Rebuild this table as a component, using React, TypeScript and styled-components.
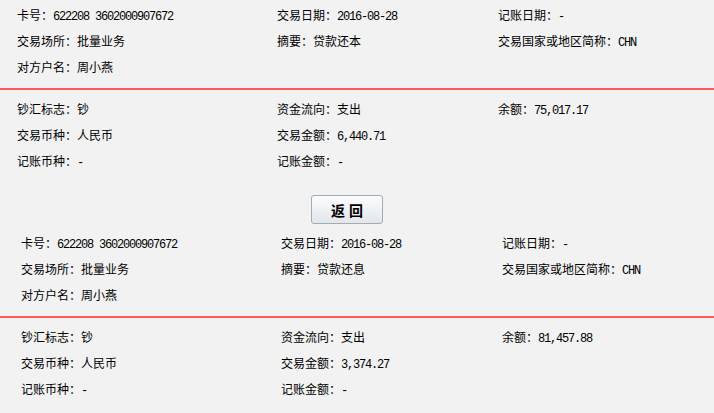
import React from 'react';
import styled, { createGlobalStyle } from 'styled-components';

const GlobalStyle = createGlobalStyle`
	html, body {
		margin: 0;
		padding: 0;
		background-color: #f2f2f2;
	}
	body {
		font-family: "Noto Sans CJK SC", "Liberation Sans", sans-serif;
		font-size: 12px;
		color: #000;
	}
`;

const Sheet = styled.div`
	width: 714px;
	padding-top: 2px;
	background-color: #f2f2f2;
`;

const InfoBlock = styled.div<{ $indent: number; $top?: number; $bottom?: number }>`
	display: grid;
	grid-template-columns: 260px 221px 1fr;
	grid-auto-rows: 26px;
	padding-left: ${(p) => p.$indent}px;
	padding-top: ${(p) => p.$top ?? 0}px;
	padding-bottom: ${(p) => p.$bottom ?? 0}px;
`;

const Cell = styled.div`
	white-space: nowrap;
	line-height: 26px;
`;

const Num = styled.span`
	font-family: "Liberation Mono", "DejaVu Sans Mono", monospace;
	font-size: 12px;
	letter-spacing: -1.2px;
`;

const Divider = styled.div`
	height: 2px;
	background-color: #fd5c5f;
`;

const ButtonBar = styled.div`
	display: flex;
	justify-content: center;
	width: 694px;
	margin: 21px 0 6px;
`;

const BackButton = styled.button`
	width: 72px;
	height: 29px;
	padding: 0;
	border: 1px solid #a3abb3;
	border-radius: 3px;
	background: linear-gradient(#fbfcfd, #e3e7ea);
	font-family: "Noto Sans CJK SC", "Liberation Sans", sans-serif;
	font-size: 14px;
	font-weight: bold;
	color: #000;
	letter-spacing: 4px;
	text-indent: 4px;
	cursor: pointer;
`;

type Field = { label: string; value: string; num?: boolean };

type RecordData = {
	top: Field[];
	bottom: Field[];
};

const records: RecordData[] = [
	{
		top: [
			{ label: '卡号', value: '622208 3602000907672', num: true },
			{ label: '交易日期', value: '2016-08-28', num: true },
			{ label: '记账日期', value: '-', num: true },
			{ label: '交易场所', value: '批量业务' },
			{ label: '摘要', value: '贷款还本' },
			{ label: '交易国家或地区简称', value: 'CHN', num: true },
			{ label: '对方户名', value: '周小燕' },
		],
		bottom: [
			{ label: '钞汇标志', value: '钞' },
			{ label: '资金流向', value: '支出' },
			{ label: '余额', value: '75,017.17', num: true },
			{ label: '交易币种', value: '人民币' },
			{ label: '交易金额', value: '6,440.71', num: true },
			{ label: '', value: '' },
			{ label: '记账币种', value: '-', num: true },
			{ label: '记账金额', value: '-', num: true },
		],
	},
	{
		top: [
			{ label: '卡号', value: '622208 3602000907672', num: true },
			{ label: '交易日期', value: '2016-08-28', num: true },
			{ label: '记账日期', value: '-', num: true },
			{ label: '交易场所', value: '批量业务' },
			{ label: '摘要', value: '贷款还息' },
			{ label: '交易国家或地区简称', value: 'CHN', num: true },
			{ label: '对方户名', value: '周小燕' },
		],
		bottom: [
			{ label: '钞汇标志', value: '钞' },
			{ label: '资金流向', value: '支出' },
			{ label: '余额', value: '81,457.88', num: true },
			{ label: '交易币种', value: '人民币' },
			{ label: '交易金额', value: '3,374.27', num: true },
			{ label: '', value: '' },
			{ label: '记账币种', value: '-', num: true },
			{ label: '记账金额', value: '-', num: true },
		],
	},
];

const FieldCell: React.FC<{ field: Field }> = ({ field }) => (
	<Cell>
		{field.label && (
			<>
				{field.label}：{field.num ? <Num>{field.value}</Num> : field.value}
			</>
		)}
	</Cell>
);

const RecordView: React.FC<{ data: RecordData; indent: number }> = ({ data, indent }) => (
	<div>
		<InfoBlock $indent={indent} $bottom={8}>
			{data.top.map((f, i) => (
				<FieldCell key={i} field={f} />
			))}
		</InfoBlock>
		<Divider />
		<InfoBlock $indent={indent} $top={6}>
			{data.bottom.map((f, i) => (
				<FieldCell key={i} field={f} />
			))}
		</InfoBlock>
	</div>
);

const App: React.FC = () => {
	return (
		<>
			<GlobalStyle />
			<Sheet>
				<RecordView data={records[0]} indent={17} />
				<ButtonBar>
					<BackButton>返回</BackButton>
				</ButtonBar>
				<RecordView data={records[1]} indent={21} />
			</Sheet>
		</>
	);
};

export default App;
